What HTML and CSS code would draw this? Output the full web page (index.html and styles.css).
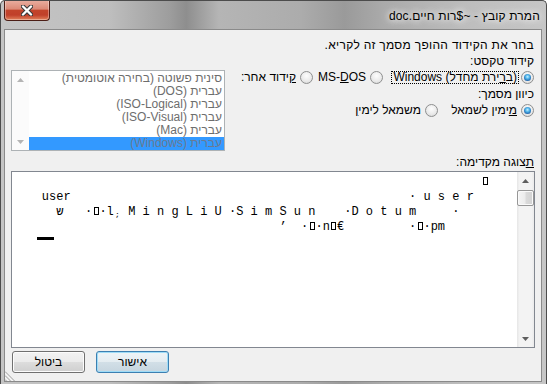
FILE: index.html
```html
<!DOCTYPE html>
<html lang="he" dir="rtl">
<head>
  <meta charset="UTF-8">
  <meta name="viewport" content="width=device-width, initial-scale=1.0">
  <title>המרת קובץ</title>
  <link rel="stylesheet" href="styles.css">
</head>
<body>
  <div class="window">
    <div class="titlebar">
      <span class="title">המרת קובץ - ~$רות חיים.doc</span>
      <div class="close-btn">
        <svg width="12" height="11" viewBox="0 0 12 11">
          <path d="M2 1.5 L10 9.5 M10 1.5 L2 9.5" stroke="#3a3a3a" stroke-width="4.4" stroke-linecap="round"/>
          <path d="M2 1.5 L10 9.5 M10 1.5 L2 9.5" stroke="#fff" stroke-width="2.4" stroke-linecap="round"/>
        </svg>
      </div>
    </div>

    <div class="client">
      <p class="line intro">בחר את הקידוד ההופך מסמך זה לקריא.</p>
      <p class="line gap-top">קידוד טקסט:</p>

      <div class="encoding">
        <div class="options">
          <div class="radio-row">
            <div class="radio-item w-win">
              <span class="radio checked"></span>
              <span class="label focus" dir="ltr">Windows (ב<u>ר</u>ירת מחדל)</span>
            </div>
            <div class="radio-item w-dos">
              <span class="radio"></span>
              <span class="label">MS-<u>D</u>OS</span>
            </div>
            <div class="radio-item">
              <span class="radio"></span>
              <span class="label"><u>ק</u>ידוד אחר:</span>
            </div>
          </div>
          <p class="line gap-label">כיוון מסמך:</p>
          <div class="radio-row">
            <div class="radio-item w-rtl">
              <span class="radio checked"></span>
              <span class="label"><u>מ</u>ימין לשמאל</span>
            </div>
            <div class="radio-item">
              <span class="radio"></span>
              <span class="label">משמאל לימי<u>ן</u></span>
            </div>
          </div>
        </div>

        <!-- disabled list of other encodings -->
        <div class="listbox">
          <ul class="list-items">
            <li>סינית פשוטה (בחירה אוטומטית)</li>
            <li>עברית (DOS)</li>
            <li>עברית (ISO-Logical)</li>
            <li>עברית (ISO-Visual)</li>
            <li>עברית (Mac)</li>
            <li class="selected">עברית (Windows)</li>
          </ul>
          <div class="scrollbar disabled">
            <span class="sb-btn"><svg width="7" height="4" viewBox="0 0 7 4"><path d="M0 4 L3.5 0 L7 4Z"/></svg></span>
            <span class="sb-space"></span>
            <span class="sb-btn"><svg width="7" height="4" viewBox="0 0 7 4"><path d="M0 0 L3.5 4 L7 0Z"/></svg></span>
          </div>
        </div>
      </div>

      <p class="line gap-preview"><u>ת</u>צוגה מקדימה:</p>
      <div class="preview">
        <div class="scrollbar">
          <span class="sb-btn"><svg width="7" height="4" viewBox="0 0 7 4"><path d="M0 4 L3.5 0 L7 4Z"/></svg></span>
          <span class="sb-thumb"></span>
          <span class="sb-space"></span>
          <span class="sb-btn"><svg width="7" height="4" viewBox="0 0 7 4"><path d="M0 0 L3.5 4 L7 0Z"/></svg></span>
        </div>
        <div class="preview-text" dir="ltr">
          <div class="row">                                                                 <span class="tofu"></span></div>
          <div class="row">    user                                               · u s e r</div>
          <div class="row">      <span class="cell">ש</span>   ·<span class="tofu"></span>·l<span class="mark">;</span> M i n g L i U ·S i m S u n    ·D o t u m     ·</div>
          <div class="row">                                     ’  ·<span class="tofu"></span>·n<span class="tofu"></span>€         ·<span class="tofu"></span>·pm</div>
          <div class="caret"></div>
        </div>
      </div>

      <div class="buttons">
        <button class="btn default">אישור</button>
        <button class="btn">ביטול</button>
      </div>

      <svg class="grip" width="11" height="11" viewBox="0 0 11 11">
        <path d="M0 2.5 L8.5 11 M0 6.5 L4.5 11" stroke="#fff" stroke-width="1"/>
        <path d="M0 1.5 L9.5 11 M0 5.5 L5.5 11 M0 9.5 L1.5 11" stroke="#9a9a9a" stroke-width="1"/>
      </svg>
    </div>
  </div>
</body>
</html>
```

FILE: styles.css
```css
body {
  margin: 0;
  font-family: "Liberation Sans", "DejaVu Sans", sans-serif;
  font-size: 12px;
  color: #000;
  background: #fff;
}

/* Window frame (glass) */
.window {
  width: 547px;
  height: 384px;
  box-sizing: border-box;
  border: 1px solid #4c4c4c;
  border-bottom: none;
  border-radius: 5px 5px 0 0;
  padding: 0 4px 2px 3px;
  display: flex;
  flex-direction: column;
  overflow: hidden;
  background: linear-gradient(90deg, #c4c4c4 0%, #bebebe 20%, #9d9d9d 31%, #8e8e8e 34%, #b5b5b5 40%, #acacac 55%, #9a9a9a 63%, #aaaaaa 70%, #bdbdbd 85%, #c6c6c6 100%);
}

.titlebar {
  height: 28px;
  display: flex;
  justify-content: space-between;
  align-items: flex-start;
  flex: none;
}
.title {
  margin: 8px 2px 0 0;
  line-height: 15px;
  white-space: nowrap;
  letter-spacing: 0.15px;
  text-shadow: 0 0 6px #fff, 0 0 10px #fff;
}
.close-btn {
  width: 46px;
  height: 21px;
  margin-top: -1px;
  box-sizing: border-box;
  border: 1px solid #4b1d15;
  border-top: none;
  border-radius: 0 0 4px 4px;
  display: flex;
  align-items: center;
  justify-content: center;
  background: linear-gradient(#eab0a2 0%, #dc8a77 45%, #c2442b 52%, #c0402a 75%, #e2825c 100%);
  box-shadow: inset 0 0 0 1px rgba(255, 255, 255, 0.35);
}

/* Client area */
.client {
  flex: 1;
  position: relative;
  background: #f0f0f0;
  border: 1px solid #8a8a8a;
  padding: 8px 6px 8px 6px;
  display: flex;
  flex-direction: column;
}
.line {
  margin: 0 1px 0 0;
  line-height: 15px;
  white-space: nowrap;
}
.intro { letter-spacing: 0.3px; }
.gap-top { margin-top: 1px; }
.gap-label { margin-top: 2px; }
.gap-preview { margin-top: 4px; }
u { text-decoration: underline; text-underline-offset: 1px; }

.encoding {
  display: flex;
  justify-content: space-between;
  align-items: flex-start;
}
.options { display: flex; flex-direction: column; }
.radio-row {
  height: 16px;
  display: flex;
  align-items: center;
  margin-right: 1px;
}
.radio-item {
  display: flex;
  align-items: center;
  gap: 2px;
  flex: none;
}
.w-win { width: 151px; }
.w-dos { width: 70px; }
.w-rtl { width: 96px; }

.radio {
  width: 13px;
  height: 13px;
  box-sizing: border-box;
  border-radius: 50%;
  border: 1px solid #8e8f8f;
  background: radial-gradient(circle at 50% 35%, #fdfdfd 0, #e9e9e9 60%, #d0d0d0 100%);
  display: flex;
  align-items: center;
  justify-content: center;
  flex: none;
}
.radio.checked::after {
  content: "";
  width: 7px;
  height: 7px;
  border-radius: 50%;
  background: radial-gradient(circle at 50% 40%, #c8f0ff 0, #52b6ea 35%, #1d62ab 75%, #17407a 100%);
}
.label {
  padding: 0 1px;
  line-height: 11px;
  border: 1px solid transparent;
  white-space: nowrap;
}
.label.focus { border: 1px dotted #000; }

/* Listbox */
.listbox {
  width: 214px;
  height: 81px;
  margin-top: 1px;
  box-sizing: border-box;
  border: 1px solid #adb2b5;
  background: #fff;
  display: flex;
}
.list-items {
  flex: 1;
  margin: 0;
  padding: 1px 0 0;
  list-style: none;
}
.list-items li {
  line-height: 13px;
  padding-right: 2px;
  color: #6d6d6d;
  white-space: nowrap;
}
.list-items li.selected { background: #3399ff; color: #6a7a92; }

/* Scrollbars */
.scrollbar {
  width: 17px;
  flex: none;
  display: flex;
  flex-direction: column;
  background: linear-gradient(90deg, #e6e6e6 0, #f3f3f3 15%, #f3f3f3 85%, #ebebeb 100%);
}
.scrollbar.disabled { background: #fbfbfb; }
.sb-btn {
  height: 17px;
  display: flex;
  align-items: center;
  justify-content: center;
  fill: #5e5e5e;
}
.scrollbar.disabled .sb-btn { fill: #b4b4b4; }
.sb-thumb {
  height: 16px;
  margin-top: 1px;
  box-sizing: border-box;
  border: 1px solid #979797;
  border-radius: 2px;
  background: linear-gradient(90deg, #f5f5f5 0, #ececec 45%, #dadada 55%, #d2d2d2 100%);
  box-shadow: inset 0 0 0 1px #fafafa;
}
.sb-space { flex: 1; }

/* Preview */
.preview {
  height: 177px;
  margin-top: 1px;
  box-sizing: border-box;
  border: 1px solid #828790;
  background: #fff;
  display: flex;
}
.preview-text {
  flex: 1;
  padding: 3px 0 0 1px;
  font-family: "Liberation Mono", "DejaVu Sans Mono", monospace;
  font-size: 12px;
  line-height: 15px;
  overflow: hidden;
}
.row { height: 15px; white-space: pre; }
.tofu {
  display: inline-block;
  width: 5px;
  height: 8px;
  margin: 0 0.6px 0 1.6px;
  box-sizing: border-box;
  border: 1px solid #000;
}
.cell { display: inline-block; width: 1ch; text-align: center; }
.mark {
  display: inline-block;
  width: 7.2px;
  font-size: 8px;
  text-align: center;
  vertical-align: -2px;
}
.caret {
  width: 17px;
  height: 3px;
  margin: 2px 0 0 24px;
  background: #000;
}

/* Buttons */
.buttons {
  display: flex;
  justify-content: flex-end;
  gap: 11px;
  margin-top: 3px;
  padding-left: 1px;
}
.btn {
  width: 73px;
  height: 22px;
  border: 1px solid #707070;
  border-radius: 3px;
  font-family: inherit;
  font-size: 12px;
  color: #000;
  background: linear-gradient(#f2f2f2 0, #ebebeb 50%, #dddddd 51%, #cfcfcf 100%);
  box-shadow: inset 0 0 0 1px #fcfcfc;
  padding: 0;
}
.btn.default {
  border-color: #3c7fb1;
  background: linear-gradient(#eef4f7 0, #e4ecf1 50%, #d2dfe7 51%, #c6d5df 100%);
  box-shadow: inset 0 0 0 1px #9fdcf7;
}

.grip { position: absolute; left: 0; bottom: 0; }
```
